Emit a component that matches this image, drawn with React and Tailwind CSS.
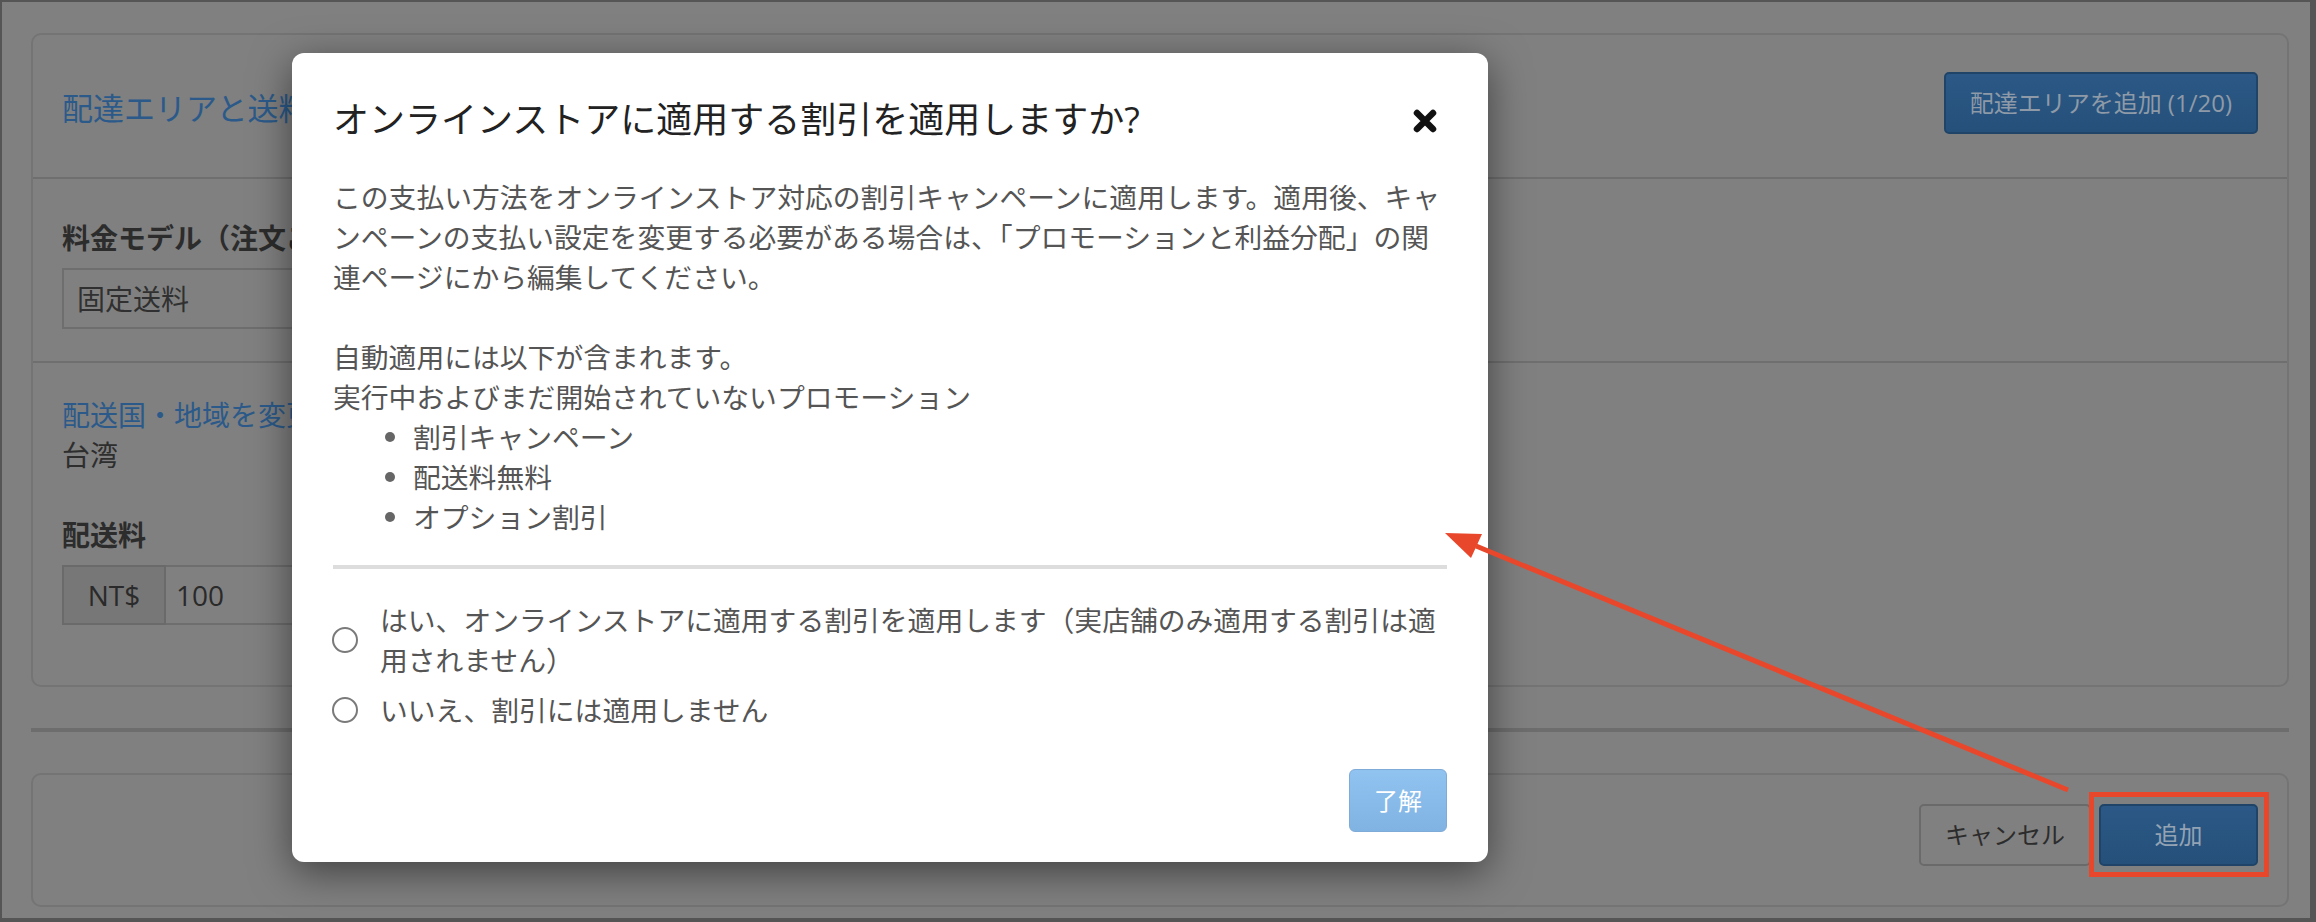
import React from 'react';

const font = { fontFamily: "'Open Sans', 'Noto Sans CJK JP', sans-serif" };

function Radio({ children }) {
  return (
    <label className="flex items-center gap-[22px]">
      <span className="ml-[-1px] w-[26px] h-[26px] shrink-0 rounded-full border-2 border-[#7a7a7a] bg-white" />
      <span className="flex-1 text-[27.8px] leading-[40px] text-[#555]">{children}</span>
    </label>
  );
}

function Bullet({ children }) {
  return (
    <li className="flex items-center">
      <span className="ml-[52px] mr-[18px] w-[10px] h-[10px] rounded-full bg-[#666]" />
      <span>{children}</span>
    </li>
  );
}

// text that runs in under the dialog is cut at its left edge
function Clip({ children }) {
  return <div className="w-[230px] overflow-hidden whitespace-nowrap">{children}</div>;
}

export default function App() {
  return (
    <div style={font} className="relative w-[2316px] h-[922px] overflow-hidden bg-[#555] pt-[2px] pl-[2px] pr-[6px] pb-[4px]">
      {/* Page under the backdrop */}
      <div className="h-full bg-[#808080] pt-[31px] pl-[29px] pr-[21px]">
        {/* Card 1 */}
        <div className="rounded-[10px] border-2 border-[#747474]">
          <div className="h-[142px] flex items-center justify-between px-[29px] pt-[4px]">
            <Clip>
              <h3 className="text-[31px] leading-[40px] text-[#2b5a8a]">配達エリアと送料設定</h3>
            </Clip>
            <button className="mt-[-10px] h-[62px] px-[24px] rounded-[5px] border-2 border-[#1f4468] bg-gradient-to-b from-[#2b5886] to-[#25507a] text-[24px] text-[#8e9aa7]">
              配達エリアを追加 (1/20)
            </button>
          </div>
          <div className="h-[2px] bg-[#6f6f6f]" />
          <div className="px-[29px] pt-[39px] pb-[32px]">
            <Clip>
              <div className="text-[28px] leading-[40px] font-bold text-[#2c2c2c]">料金モデル（注文ごとの送料）</div>
            </Clip>
            <div className="mt-[10px] w-[1000px] h-[61px] border-2 border-[#6e6e6e] flex items-center pl-[13px] text-[28px] text-[#303030]">
              固定送料
            </div>
          </div>
          <div className="h-[2px] bg-[#6f6f6f]" />
          <div className="px-[29px] pt-[32px] pb-[60px]">
            <Clip>
              <div className="text-[28px] leading-[40px] text-[#2b5a8a]">配送国・地域を変更</div>
            </Clip>
            <div className="text-[28px] leading-[40px] text-[#2e2e2e]">台湾</div>
            <div className="mt-[40px] text-[28px] leading-[40px] font-bold text-[#2c2c2c]">配送料</div>
            <div className="mt-[10px] flex h-[60px] w-[1000px]">
              <div className="w-[104px] border-2 border-[#6a6a6a] bg-[#777] flex items-center justify-center text-[28px] text-[#2a2a2a]">NT$</div>
              <div className="flex-1 border-2 border-l-0 border-[#6e6e6e] flex items-center pl-[10px] text-[28px] text-[#2a2a2a]">100</div>
            </div>
          </div>
        </div>

        <div className="mt-[41px] h-[4px] bg-[#6d6d6d]" />

        {/* Card 2 */}
        <div className="mt-[41px] rounded-[10px] border-2 border-[#747474] h-[134px] flex justify-end items-start gap-[8px] pt-[29px] pr-[29px]">
          <button className="h-[62px] px-[24px] rounded-[5px] border-2 border-[#6a6a6a] bg-[#808080] text-[24px] text-[#2c2c2c]">キャンセル</button>
          <button className="h-[62px] w-[159px] rounded-[5px] border-2 border-[#1f4468] bg-gradient-to-b from-[#2b5886] to-[#25507a] text-[24px] text-[#93a3b4]">追加</button>
        </div>
      </div>

      {/* Modal */}
      <div className="absolute left-[292px] top-[53px] w-[1196px] rounded-[12px] bg-white px-[41px] pt-[47px] pb-[30px] shadow-[0_10px_40px_rgba(0,0,0,0.5)]">
        <div className="flex items-center justify-between">
          <h4 className="text-[36px] leading-[40px] text-[#222]">オンラインストアに適用する割引を適用しますか?</h4>
          <svg width="24" height="24" viewBox="0 0 24 24" className="mr-[10px] mt-[2px]">
            <path d="M4 4 L20 20 M20 4 L4 20" stroke="#111" strokeWidth="6.5" strokeLinecap="round" />
          </svg>
        </div>
        <div className="mt-[37px] text-[27.8px] leading-[40px] text-[#555]">
          <p>この支払い方法をオンラインストア対応の割引キャンペーンに適用します。適用後、キャンペーンの支払い設定を変更する必要がある場合は、「プロモーションと利益分配」の関連ページにから編集してください。</p>
          <p className="mt-[40px]">自動適用には以下が含まれます。</p>
          <p>実行中およびまだ開始されていないプロモーション</p>
          <ul>
            <Bullet>割引キャンペーン</Bullet>
            <Bullet>配送料無料</Bullet>
            <Bullet>オプション割引</Bullet>
          </ul>
        </div>
        <div className="mt-[28px] h-[4px] bg-[#dddddd]" />
        <div className="mt-[31px] flex flex-col gap-[10px]">
          <Radio>はい、オンラインストアに適用する割引を適用します（実店舗のみ適用する割引は適用されません）</Radio>
          <Radio>いいえ、割引には適用しません</Radio>
        </div>
        <div className="mt-[39px] flex justify-end">
          <button className="h-[63px] px-[24px] rounded-[6px] border border-[#7fabd8] bg-gradient-to-b from-[#90c3f0] to-[#80b3e2] text-[24px] text-white">了解</button>
        </div>
      </div>

      {/* Annotation */}
      <svg className="absolute inset-0 pointer-events-none" width="2316" height="922">
        <line x1="2068" y1="790" x2="1476" y2="546" stroke="#e8472b" strokeWidth="5" />
        <polygon points="1445,533 1482,534 1471,558" fill="#e8472b" />
      </svg>
      <div className="absolute left-[2089px] top-[792px] w-[180px] h-[85px] border-[5px] border-[#e8472b]" />
    </div>
  );
}
